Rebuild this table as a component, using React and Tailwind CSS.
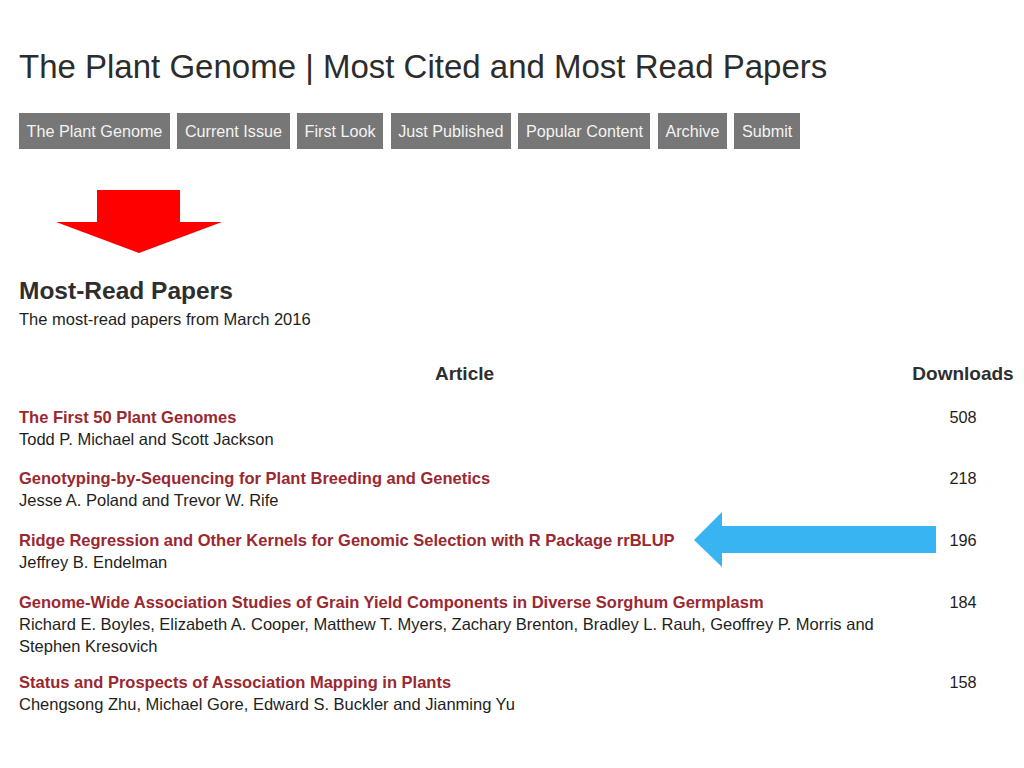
import React from "react";

const tabs = [
  "The Plant Genome",
  "Current Issue",
  "First Look",
  "Just Published",
  "Popular Content",
  "Archive",
  "Submit",
];

const papers = [
  {
    title: "The First 50 Plant Genomes",
    authors: "Todd P. Michael and Scott Jackson",
    downloads: 508,
    gap: "pb-[18px]",
  },
  {
    title: "Genotyping-by-Sequencing for Plant Breeding and Genetics",
    authors: "Jesse A. Poland and Trevor W. Rife",
    downloads: 218,
    gap: "pb-[18.6px]",
  },
  {
    title:
      "Ridge Regression and Other Kernels for Genomic Selection with R Package rrBLUP",
    authors: "Jeffrey B. Endelman",
    downloads: 196,
    gap: "pb-[18.6px]",
  },
  {
    title:
      "Genome-Wide Association Studies of Grain Yield Components in Diverse Sorghum Germplasm",
    authors:
      "Richard E. Boyles, Elizabeth A. Cooper, Matthew T. Myers, Zachary Brenton, Bradley L. Rauh, Geoffrey P. Morris and Stephen Kresovich",
    downloads: 184,
    gap: "pb-[14.8px]",
  },
  {
    title: "Status and Prospects of Association Mapping in Plants",
    authors: "Chengsong Zhu, Michael Gore, Edward S. Buckler and Jianming Yu",
    downloads: 158,
    gap: "",
  },
];

export default function App() {
  return (
    <div
      className="relative w-[1024px] h-[768px] overflow-hidden bg-white pl-[19px]"
      style={{ fontFamily: '"Liberation Sans", Arial, sans-serif' }}
    >
      <h1 className="mt-[47px] text-[33px] leading-[40px] text-[#2c2c2c]">
        The Plant Genome | Most Cited and Most Read Papers
      </h1>

      <nav className="mt-[26px] flex gap-[7.5px]">
        {tabs.map((t) => (
          <a
            key={t}
            className="flex h-[36px] items-center bg-[#777777] px-[7.5px] text-[16.2px] text-[#f3f3f3]"
          >
            {t}
          </a>
        ))}
      </nav>

      {/* red arrow pointing down */}
      <svg className="mt-[41px] ml-[37px] block" width="166" height="64" viewBox="0 0 166 64">
        <polygon points="41,0 124,0 124,32 166,32 83,63 0,32 41,32" fill="#ff0000" />
      </svg>

      <h2 className="mt-[23px] text-[24.5px] font-bold leading-[28px] text-[#2e2e2e]">
        Most-Read Papers
      </h2>
      <p className="mt-[3px] text-[16.5px] leading-[22px] text-[#1e1e1e]">
        The most-read papers from March 2016
      </p>

      <div className="mt-[32px] grid grid-cols-[891px_106px] text-[19px] font-bold leading-[24px] text-[#2e2e2e]">
        <div className="text-center">Article</div>
        <div className="text-center">Downloads</div>
      </div>

      <div className="mt-[21px]">
        {papers.map((p) => (
          <div key={p.title} className={`grid grid-cols-[891px_106px] ${p.gap}`}>
            <div>
              <div className="text-[16.5px] font-bold leading-[21.7px] text-[#9a2830]">
                {p.title}
              </div>
              <div className="text-[16.5px] leading-[21.7px] text-[#1e1e1e]">
                {p.authors}
              </div>
            </div>
            <div className="text-center text-[16.3px] leading-[21.7px] text-[#1e1e1e]">
              {p.downloads}
            </div>
          </div>
        ))}
      </div>

      {/* blue arrow pointing left */}
      <svg
        className="absolute left-[693px] top-[512px]"
        width="243"
        height="55"
        viewBox="0 0 243 55"
      >
        <polygon points="1,28 29,0 29,14 243,14 243,41 29,41 29,55" fill="#39b4f3" />
      </svg>
    </div>
  );
}
